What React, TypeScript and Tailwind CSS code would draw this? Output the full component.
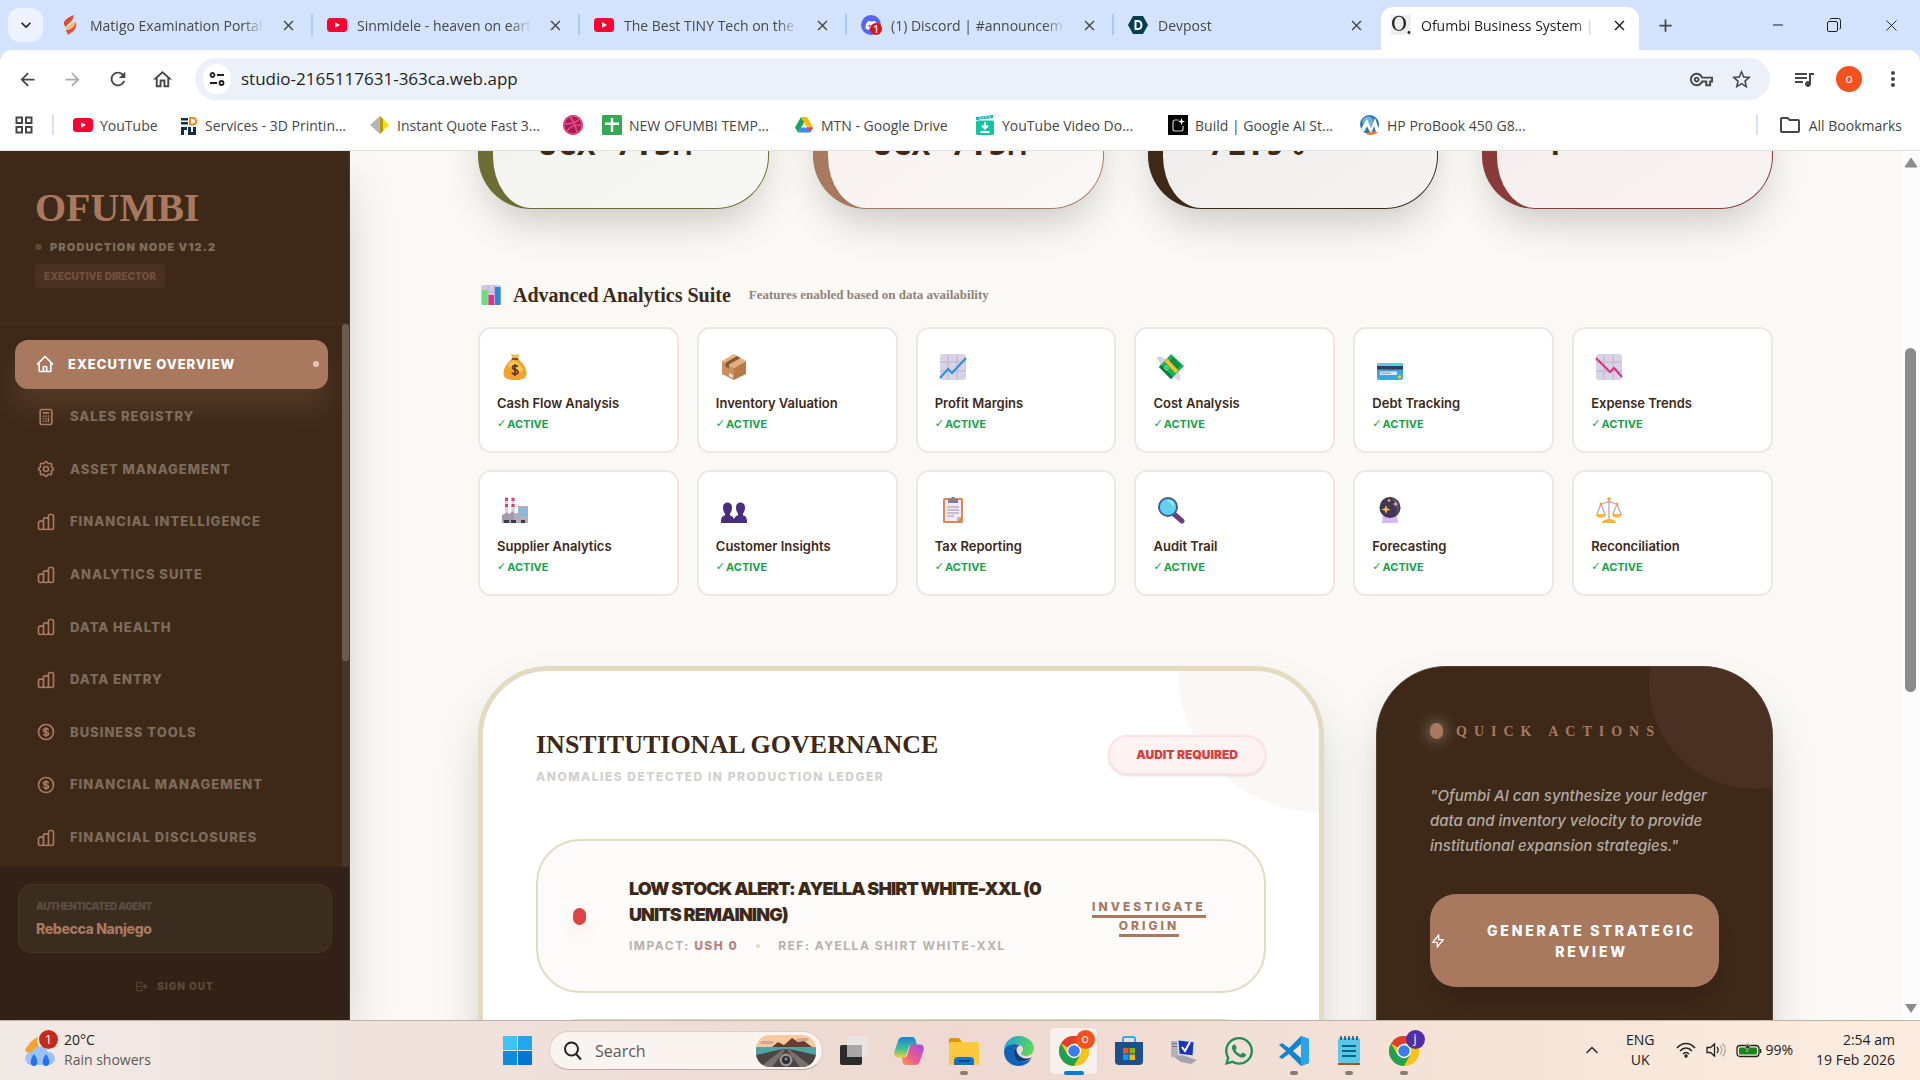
import React from 'react';
import {
    HiOutlineHome,
    HiOutlineCalculator,
    HiOutlineCog,
    HiOutlineChartBar,
    HiOutlineCurrencyDollar,
    HiOutlineLogout,
    HiOutlineLightningBolt,
} from 'react-icons/hi';
import { MdArrowBack, MdArrowForward, MdRefresh, MdOutlineHome, MdStarBorder, MdMoreVert, MdOutlineVpnKey, MdQueueMusic, MdClose, MdAdd, MdExpandMore, MdOutlineFolder } from 'react-icons/md';
import { FaDiscord, FaDribbble, FaWhatsapp } from 'react-icons/fa';
import { ChevronUp, Minus, X } from 'lucide-react';

// --- Favicons ---
const YouTubeIcon = () => (
    <svg viewBox="0 0 20 20" className="w-5 h-5 shrink-0">
        <rect y="3" width="20" height="14" rx="3.500" fill="#ff0033" />
        <path d="M8 7.200v5.600l5-2.800z" fill="#fff" />
    </svg>
);

const MatigoIcon = () => (
    <svg viewBox="0 0 20 20" className="w-5 h-5 shrink-0">
        <path d="M13.500 0C8 3 3.500 5 4 9c.3 1.500 1.500 2.500 2 3 1-4 8-5 7.500-12z" fill="#e8452c" />
        <path d="M6 12c4 0 5-3.500 9-5-1 4-4 6-8 7z" fill="#fbbc14" />
        <path d="M15.500 7c2 4 0 9-8 13 .3-3-1.500-3.500-1.500-5 4-.5 8.500-2 9.500-8z" fill="#f0483e" />
    </svg>
);

const DiscordIcon = () => (
    <span className="relative w-5 h-5 shrink-0 rounded-full bg-[#5865f2] flex items-center justify-center">
        <FaDiscord size={13} className="text-white" />
        <span className="absolute -right-px bottom-0 w-3 h-3 rounded-full bg-[#e0101a] text-white text-[10px] leading-3 text-center font-semibold">1</span>
    </span>
);

const DevpostIcon = () => (
    <svg viewBox="0 0 20 20" className="w-5 h-5 shrink-0">
        <path d="M5 1h10l5 9-5 9H5l-5-9z" fill="#003e54" />
        <path d="M6.500 5h3.300c3 0 4.700 2 4.700 5s-1.700 5-4.700 5H6.500zm2 1.900v6.200h1.300c1.700 0 2.600-1.100 2.600-3.100s-.9-3.100-2.600-3.100z" fill="#fff" />
    </svg>
);

const OfumbiIcon = () => (
    <svg viewBox="0 0 20 20" className="w-5 h-5 shrink-0">
        <rect width="20" height="20" fill="#eeeeee" />
        <path fillRule="evenodd" d="M8 .8c4 0 7 3 7 7.400s-3 7.600-7 7.600-7-3.200-7-7.600S4 .8 8 .8zm0 .9C5 1.700 3.400 4.500 3.400 8.200S5 14.900 8 14.900s4.600-2.900 4.600-6.700S11 1.700 8 1.700z" fill="#222" />
        <circle cx="18" cy="17.500" r="1.400" fill="#222" />
    </svg>
);

const PrintIcon = () => (
    <svg viewBox="0 0 20 20" className="w-5 h-5 shrink-0">
        <path d="M3 3h7v2.500H3zM3 7h7v2.500H3zM3 12h6v3H6v5H3zM10 12h3v5h2v-5h3v8h-8z" fill="#12304e" />
        <path d="M12 3h3c4 0 4 6.500 0 6.500h-3z" fill="none" stroke="#f28a1c" strokeWidth="2" />
    </svg>
);

const QuoteIcon = () => (
    <svg viewBox="0 0 20 20" className="w-5 h-5 shrink-0">
        <path d="M10 1v18L0 10z" fill="#b5b5b5" />
        <path d="M10 1v18l4-4V5z" fill="#b89d00" />
        <path d="M13 4v12l6-6z" fill="#ffdc00" />
    </svg>
);

const DribbbleIcon = () => (
    <span className="w-5 h-5 shrink-0 rounded-full bg-[#a81c56] flex items-center justify-center">
        <FaDribbble size={20} className="text-[#ea4c89]" />
    </span>
);

const SheetPlusIcon = () => (
    <svg viewBox="0 0 20 20" className="w-5 h-5 shrink-0">
        <rect width="20" height="20" rx="1.500" fill="#34a853" />
        <path d="M8.800 3h2.400v4.500H17v2.400h-5.800V17H8.800V9.900H3V7.500h5.800z" fill="#fff" />
    </svg>
);

const DriveIcon = () => (
    <svg viewBox="0 0 20 20" className="w-5 h-5 shrink-0">
        <path d="M7 2 1 12.500l3 5L10.500 7z" fill="#1ea362" />
        <path d="M7 2h6l6 10.500h-6z" fill="#ffba00" />
        <path d="M13 12.500h6l-3 5H4l3-5z" fill="#4285f4" />
        <path d="M13 12.500h6l-2.500 4.500z" fill="#ea4335" />
    </svg>
);

const DownloaderIcon = () => (
    <svg viewBox="0 0 20 20" className="w-5 h-5 shrink-0">
        <path d="m1 2 17-2v3L1 5z" fill="#16b4c8" />
        <path d="m4 2 2 2m1-2.500 2 2m1-2.500 2 2m1-2.500 2 2" stroke="#fff" />
        <rect x="1" y="5.500" width="18" height="14.500" rx="1.500" fill="#14c3a2" />
        <path d="M10 7v6m-3-2.500 3 3 3-3M5.500 17h9" fill="none" stroke="#fff" strokeWidth="2" />
    </svg>
);

const BuildIcon = () => (
    <svg viewBox="0 0 20 20" className="w-5 h-5 shrink-0">
        <rect width="20" height="20" fill="#000" />
        <path d="M10.500 5H7a2 2 0 0 0-2 2v7a2 2 0 0 0 2 2h6a2 2 0 0 0 2-2v-3" fill="none" stroke="#ccc" strokeWidth="1.200" />
        <path d="m13.500 3 .9 2.600L17 6.500l-2.600.9-.9 2.600-.9-2.600L10 6.500l2.600-.9z" fill="#fff" />
    </svg>
);

const HpIcon = () => (
    <svg viewBox="0 0 20 20" className="w-5 h-5 shrink-0">
        <circle cx="9.500" cy="9.500" r="9.500" fill="#2f78b0" />
        <circle cx="8" cy="7" r="5.500" fill="#72b1da" />
        <path d="m1 14 6-10 4 9 4-10 4 12-3 2-2-6-3 8-4-8-3 6z" fill="#fff" />
        <path d="M6 19c4-3 8-3 12-2-3 3-8 4-12 2z" fill="#f5822a" />
    </svg>
);

const TABS = [
    { title: 'Matigo Examination Portal', icon: <MatigoIcon /> },
    { title: 'Sinmidele - heaven on eart', icon: <YouTubeIcon /> },
    { title: 'The Best TINY Tech on the', icon: <YouTubeIcon /> },
    { title: '(1) Discord | #announceme', icon: <DiscordIcon /> },
    { title: 'Devpost', icon: <DevpostIcon /> },
    { title: 'Ofumbi Business System | I', icon: <OfumbiIcon />, active: true },
];

const BOOKMARKS = [
    { title: 'YouTube', icon: <YouTubeIcon />, width: 'w-[105px]' },
    { title: 'Services - 3D Printin...', icon: <PrintIcon />, width: 'w-[192px]' },
    { title: 'Instant Quote Fast 3...', icon: <QuoteIcon />, width: 'w-[193px]' },
    { title: '', icon: <DribbbleIcon />, width: 'w-[39px]' },
    { title: 'NEW OFUMBI TEMP...', icon: <SheetPlusIcon />, width: 'w-[192px]' },
    { title: 'MTN - Google Drive', icon: <DriveIcon />, width: 'w-[181px]' },
    { title: 'YouTube Video Do...', icon: <DownloaderIcon />, width: 'w-[193px]' },
    { title: 'Build | Google AI St...', icon: <BuildIcon />, width: 'w-[192px]' },
    { title: 'HP ProBook 450 G8...', icon: <HpIcon />, width: 'w-[192px]' },
];

const BrowserChrome = () => (
    <header className="shrink-0 bg-[#d3e3fd] font-['Open_Sans',sans-serif] text-[#474747]">
        <div className="h-[50px] flex items-end">
            <button aria-label="Search tabs" className="ml-2 mr-[3px] mb-2 w-[35px] h-[34px] rounded-xl bg-[#edf3fe] flex items-center justify-center text-[#1f1f1f]">
                <MdExpandMore size={20} />
            </button>
            <div className="flex-1 flex items-end">
                {TABS.map((tab) => (
                    <div
                        key={tab.title}
                        className={`flex-1 flex items-center text-[14px] ${tab.active ? 'max-w-[258px] h-[43px] pb-[7px] bg-white rounded-t-xl mr-2 pl-[10px] pr-2 text-[#1f1f1f]' : 'max-w-[267px] h-[50px] pl-[14px] pr-[13px] relative'}`}
                    >
                        {tab.icon}
                        <button className="ml-[10px] flex-1 min-w-0 text-left overflow-hidden whitespace-nowrap [mask-image:linear-gradient(to_right,black_88%,transparent)]">
                            {tab.title}
                        </button>
                        <button aria-label="Close tab" className="ml-3 shrink-0 w-6 h-6 flex items-center justify-center">
                            <MdClose size={17} />
                        </button>
                        {!tab.active && tab.title !== 'Devpost' && <span className="absolute right-0 top-[14px] w-[2px] h-[21px] bg-[#a8c7fa]" />}
                    </div>
                ))}
                <button aria-label="New tab" className="w-9 h-[50px] flex items-center justify-center">
                    <MdAdd size={21} />
                </button>
            </div>
            <div className="flex h-[50px] items-center text-[#1f1f1f]">
                <button aria-label="Minimise" className="w-14 flex justify-center"><Minus size={16} strokeWidth={1.5} /></button>
                <button aria-label="Restore" className="w-14 flex justify-center">
                    <svg viewBox="0 0 14 14" className="w-[14px] h-[14px]" fill="none" stroke="currentColor">
                        <rect x=".5" y="3.500" width="10" height="10" rx="1.500" />
                        <path d="M3 1.500C3 .8 3.500.5 4 .5h7.500a2 2 0 0 1 2 2V10c0 .6-.4 1-1 1" />
                    </svg>
                </button>
                <button aria-label="Close" className="w-[58px] flex justify-center"><X size={19} strokeWidth={1.2} /></button>
            </div>
        </div>

        <div className="bg-white rounded-t-xl">
            <div className="h-[50px] pt-2 flex items-center">
                <button aria-label="Back" className="ml-[5px] w-[45px] flex justify-center"><MdArrowBack size={21} /></button>
                <button aria-label="Forward" className="w-[45px] flex justify-center text-[#aaaaaa]"><MdArrowForward size={21} /></button>
                <button aria-label="Reload" className="w-[45px] flex justify-center"><MdRefresh size={22} /></button>
                <button aria-label="Home" className="w-[45px] flex justify-center"><MdOutlineHome size={23} /></button>
                <div className="ml-[10px] flex-1 h-[42px] rounded-full bg-[#ecf0f9] flex items-center pl-[8px] pr-[17px]">
                    <span className="w-[28px] h-[30px] rounded-full bg-white flex items-center justify-center text-[#1f1f1f]">
                        <svg viewBox="0 0 16 16" className="w-4 h-4" fill="none" stroke="currentColor" strokeWidth="1.800">
                            <circle cx="3.500" cy="4" r="2" />
                            <path d="M8 4h7M1 12h7" />
                            <circle cx="12.500" cy="12" r="2" />
                        </svg>
                    </span>
                    <input aria-label="Address" defaultValue="studio-2165117631-363ca.web.app" className="ml-[10px] flex-1 bg-transparent outline-none text-[17px] text-[#1f1f1f]" />
                    <MdOutlineVpnKey size={23} />
                    <button aria-label="Bookmark this page" className="ml-[17px]"><MdStarBorder size={23} /></button>
                </div>
                <button aria-label="Media" className="ml-[22px]"><MdQueueMusic size={24} /></button>
                <button aria-label="Profile" className="ml-[20px] w-[26px] h-[26px] rounded-full bg-[#f4511e] text-white text-[12px] leading-[24px]">o</button>
                <button aria-label="Menu" className="ml-[19px] mr-[15px]"><MdMoreVert size={24} /></button>
            </div>
            <div className="h-[51px] flex items-center text-[14px] border-b border-[#dde3dd]">
                <svg viewBox="0 0 18 18" className="ml-[15px] w-[18px] h-[18px]" fill="none" stroke="currentColor" strokeWidth="2">
                    <path d="M1.500 1.500H7V7H1.500zM11 1.500h5.500V7H11zM1.500 11H7v5.500H1.500zM11 11h5.500v5.500H11z" />
                </svg>
                <span className="ml-[19px] mr-[19px] w-[2px] h-5 bg-[#d3e3fd]" />
                {BOOKMARKS.map((item) => (
                    <a key={item.width + item.title} href="#" aria-label={item.title || 'Dribbble'} className={`${item.width} shrink-0 flex items-center gap-[7px] whitespace-nowrap`}>
                        {item.icon}
                        {item.title}
                    </a>
                ))}
                <span className="ml-auto w-[2px] h-5 bg-[#d3e3fd]" />
                <a href="#" className="ml-5 mr-[18px] flex items-center gap-[7px] whitespace-nowrap"><MdOutlineFolder size={24} />All Bookmarks</a>
            </div>
        </div>
    </header>
);

// --- Sidebar ---
const NAV = [
    { label: 'Executive Overview', icon: HiOutlineHome, active: true },
    { label: 'Sales Registry', icon: HiOutlineCalculator },
    { label: 'Asset Management', icon: HiOutlineCog },
    { label: 'Financial Intelligence', icon: HiOutlineChartBar },
    { label: 'Analytics Suite', icon: HiOutlineChartBar },
    { label: 'Data Health', icon: HiOutlineChartBar },
    { label: 'Data Entry', icon: HiOutlineChartBar },
    { label: 'Business Tools', icon: HiOutlineCurrencyDollar },
    { label: 'Financial Management', icon: HiOutlineCurrencyDollar },
    { label: 'Financial Disclosures', icon: HiOutlineChartBar },
];

const Sidebar = () => (
    <aside className="relative z-10 w-[350px] shrink-0 flex flex-col bg-[#3e2919] border-r border-[#503629] shadow-[0_25px_50px_-12px_rgba(0,0,0,0.25)]">
        <div className="h-[173px] pt-[33px] pl-[35px] border-b border-[#4a3223]">
            <div className="font-['Liberation_Serif',serif] font-bold text-[40px] leading-[48px] text-[#a8795f]">OFUMBI</div>
            <div className="mt-[7px] flex items-center gap-2">
                <span className="w-[7px] h-[6px] rounded-full bg-[#55502b]" />
                <span className="text-[11px] leading-4 font-black tracking-widest text-[#7d6c5d]">PRODUCTION NODE V12.2</span>
            </div>
            <div className="mt-[9px] inline-block px-[9px] rounded bg-[#493022] text-[10px] leading-6 font-black text-[#744f3b]">EXECUTIVE DIRECTOR</div>
        </div>

        <div className="flex-1 min-h-0 flex">
            <nav className="flex-1 flex flex-col pt-[14px] pb-[3px] pl-[15px] pr-[14px]">
                {NAV.map(({ label, icon: Icon, active }) => (
                    <div key={label} className="flex-1 py-[2px]">
                        <a
                            href="#"
                            className={`h-full flex items-center uppercase text-[13px] font-extrabold tracking-[1px] ${active ? 'pl-5 pr-[9px] gap-[13px] rounded-[13px] bg-[#a8795f] text-white shadow-[0_20px_25px_0_rgba(168,121,95,0.18)]' : 'pl-[21px] gap-[14px] text-[#7d6c5d]'}`}
                        >
                            <Icon size={20} className={active ? 'text-white' : 'text-[#a8795f]'} />
                            {label}
                            {active && <span className="ml-auto w-[6px] h-[6px] rounded-full bg-[#dcc7bd]" />}
                        </a>
                    </div>
                ))}
            </nav>
            <div className="w-[7px] bg-[#483529] rounded-full">
                <div className="h-[62%] bg-[#6d5b4f] rounded-full" />
            </div>
        </div>

        <div className="h-[153px] pt-[17px] px-[18px] bg-[#322116]">
            <div className="h-[69px] rounded-[13px] border border-[#44342a] bg-[#3b2c20] pl-[17px] pt-[13px] mr-[-1px]">
                <div className="text-[10px] leading-4 font-black tracking-tighter text-[#5c4d42]">AUTHENTICATED AGENT</div>
                <div className="mt-[5px] text-[14px] leading-5 font-extrabold tracking-tight text-[#a8795f]">Rebecca Nanjego</div>
            </div>
            <button className="mt-[25px] w-full flex items-center justify-center gap-[9px] text-[10px] leading-4 font-black tracking-widest text-[#5c483a]">
                <HiOutlineLogout size={13} />
                SIGN OUT
            </button>
        </div>
    </aside>
);

// --- Feature icons ---
const ChartFrame = ({ children }: { children: React.ReactNode }) => (
    <svg viewBox="0 0 28 28" className="w-7 h-7">
        <rect x="1" y="1" width="26" height="26" rx="3" fill="#d9d1e4" />
        <path d="M1 9h26M1 18h26M9 1v26M18 1v26" stroke="#bfb4cf" />
        {children}
    </svg>
);

const BarsEmoji = () => (
    <svg viewBox="0 0 20 20" className="w-5 h-5">
        <rect width="20" height="20" rx="2" fill="#d3cbe0" />
        <path d="M0 7h20M0 14h20M7 0v20M13.500 0v20" stroke="#b9aecb" />
        <rect x="1" y="5" width="5.500" height="15" fill="#6fdc7c" />
        <rect x="7.500" y="10" width="5.500" height="10" fill="#e0308a" />
        <rect x="14" y="2" width="5.500" height="18" fill="#2a86e0" />
    </svg>
);

const MoneyBag = () => (
    <svg viewBox="0 0 28 28" className="w-7 h-7">
        <path d="M10 1l4 1 4-1-1.500 5h-5z" fill="#f5b63a" />
        <path d="M11 6h6c5 4 8.500 9 8.500 14 0 5-3 7-11.500 7S2.500 25 2.500 20C2.500 15 6 10 11 6z" fill="#f2a32e" />
        <path d="M12 7c5 2 10 7 10 11-5 2-12-1-15-6z" fill="#fbc653" />
        <rect x="10.500" y="5" width="7" height="2" rx="1" fill="#7a4b33" />
        <path d="M17 13.500c-1.500-1.500-5.500-1.300-5.500 1 0 2.800 5.500 1.500 5.500 4.500 0 2.500-4.500 2.500-6 .8M14 11v12" fill="none" stroke="#5f3d2b" strokeWidth="1.800" />
    </svg>
);

const Box = () => (
    <svg viewBox="0 0 28 28" className="w-7 h-7">
        <path d="M14 1 26 8 14 15 2 8z" fill="#e0b07c" />
        <path d="M2 8v13l12 6V15z" fill="#c98e5e" />
        <path d="M26 8v13l-12 6V15z" fill="#b97848" />
        <path d="M17 3 5.500 9.800v4L9 15.500v-4L20.500 5z" fill="#8b5638" />
        <path d="m9 20 4 2v3l-4-2z" fill="#f0dede" />
    </svg>
);

const FlyingMoney = () => (
    <svg viewBox="0 0 28 28" className="w-7 h-7">
        <path d="M0 4c5-1 9 2 11 5l-6 6C3 13 2 11 3 9 1 8 0 6 0 4z" fill="#d4d2da" />
        <path d="M18 16c5 3 6 7 5 12-4-2-8-4-9-9z" fill="#dcdbe2" />
        <path d="M14 1 27 13 14 26 2 14z" fill="#17b45a" />
        <path d="m16 4 8 8-4 4-8-8z" fill="#0f8c46" />
        <path d="m9 7 11 12" stroke="#fbbf2d" strokeWidth="4" />
        <path d="m2 14 12 12 2-2L4 12z" fill="#0c7b3d" />
        <circle cx="9.500" cy="15" r="1.800" fill="none" stroke="#9be8b8" />
    </svg>
);

const CreditCard = () => (
    <svg viewBox="0 0 28 28" className="w-7 h-7">
        <rect x="1" y="10" width="26" height="17" rx="2" fill="#35a9e8" />
        <path d="M1 12a2 2 0 0 1 2-2h22a2 2 0 0 1 2 2v1H1z" fill="#55cfe8" />
        <path d="M1 13h26v3.500H1z" fill="#403750" />
        <rect x="4" y="18.500" width="17" height="3.500" fill="#e8e2ea" />
        <path d="M5 20.200h10" stroke="#9d92a8" />
        <circle cx="23.500" cy="24" r="1.800" fill="#f7c531" />
    </svg>
);

const Factory = () => (
    <svg viewBox="0 0 28 28" className="w-7 h-7">
        <path d="M4 1h3v16H4zM10.500 1h3v16h-3z" fill="#d8d0dd" />
        <path d="M4 2h3v3H4zM4 8h3v3H4zM10.500 2h3v3h-3zM10.500 8h3v3h-3z" fill="#e33a78" />
        <path d="M1 19l6-3v2l6-3v12H1z" fill="#a59bab" />
        <path d="M13 17h4v-7h10v17H13z" fill="#b5adbd" />
        <path d="M18 12h8v8h-8z" fill="#5cc8f5" />
        <path d="M20.600 12v8M23.300 12v8M18 14.600h8M18 17.300h8" stroke="#b5adbd" />
        <path d="M3 24h5v3H3zM10 24h5v3h-5zM20 24h4v3h-4z" fill="#3f3648" />
    </svg>
);

const People = () => (
    <svg viewBox="0 0 28 28" className="w-7 h-7">
        <path d="M3 11c0-6 9-6 9 0 0 3-.8 5-2 6.500v2c3 .5 4 2 4 7.500H1c0-5.500 1-7 4-7.500v-2C3.800 16 3 14 3 11zM16 11c0-6 9-6 9 0 0 3-.8 5-2 6.500v2c3 .5 4 2 4 7.500H14c0-5.500 1-7 4-7.500v-2C16.800 16 16 14 16 11z" fill="#4b2d80" />
        <path d="M14 22v5" stroke="#351c63" />
    </svg>
);

const Clipboard = () => (
    <svg viewBox="0 0 28 28" className="w-7 h-7">
        <rect x="4" y="2" width="20" height="25" rx="1.500" fill="#d98a52" />
        <path d="M6 4h16v17l-4 4H6z" fill="#efeaf5" />
        <path d="M18 25v-4h4z" fill="#c2b6d0" />
        <path d="M8 11h12M8 14h12M8 17h12M8 20h7" stroke="#9d92a8" strokeWidth="1.200" />
        <path d="M9 3h3c0-3 4-3 4 0h3v4H9z" fill="#85798c" />
    </svg>
);

const Magnifier = () => (
    <svg viewBox="0 0 28 28" className="w-7 h-7">
        <path d="m17 18 8 7" stroke="#6e3d86" strokeWidth="5" strokeLinecap="round" />
        <circle cx="11" cy="11" r="9" fill="#62d0ef" stroke="#3f5f9e" strokeWidth="2" />
        <path d="M11 5c3 0 5 2 5 5" fill="none" stroke="#a6ecfb" strokeWidth="2" />
    </svg>
);

const CrystalBall = () => (
    <svg viewBox="0 0 28 28" className="w-7 h-7">
        <path d="M7 20h14l1 7H6z" fill="#d9b7f2" />
        <circle cx="14" cy="11.500" r="10.500" fill="#433556" />
        <path d="M14 1a10.500 10.500 0 0 1 6 18c2-6 0-13-6-18z" fill="#5e4b75" />
        <path d="m10 9 1.200 3.300L14.500 13.500l-3.300 1.200L10 18l-1.200-3.300-3.300-1.200 3.300-1.200zM19.500 5l.8 2.200 2.200.8-2.200.8-.8 2.200-.8-2.200-2.200-.8 2.200-.8z" fill="#fbb946" />
        <circle cx="13" cy="4.500" r="1.300" fill="#fbb946" />
    </svg>
);

const Scales = () => (
    <svg viewBox="0 0 28 28" className="w-7 h-7">
        <path d="M14 3v22M6 8c3 0 5-2 8-2s5 2 8 2M6 8 2 18M6 8l4 10M22 8l-4 10M22 8l4 10" fill="none" stroke="#baa5bf" strokeWidth="1.300" />
        <path d="M1 18h10c0 5-10 5-10 0zM17 18h10c0 5-10 5-10 0zM7 27c0-3 4-4 7-4s7 1 7 4z" fill="#fbb53a" />
        <circle cx="14" cy="3" r="1.800" fill="#f7a62a" />
        <circle cx="6" cy="8" r="1.500" fill="#f7a62a" />
        <circle cx="22" cy="8" r="1.500" fill="#f7a62a" />
    </svg>
);

const FEATURES = [
    { name: 'Cash Flow Analysis', icon: <MoneyBag /> },
    { name: 'Inventory Valuation', icon: <Box /> },
    { name: 'Profit Margins', icon: <ChartFrame><path d="m1 25 8-9 4 4L27 5" fill="none" stroke="#2a8fe0" strokeWidth="2" /></ChartFrame> },
    { name: 'Cost Analysis', icon: <FlyingMoney /> },
    { name: 'Debt Tracking', icon: <CreditCard /> },
    { name: 'Expense Trends', icon: <ChartFrame><path d="m1 5 14 14 4-4 8 9" fill="none" stroke="#e0307a" strokeWidth="2" /></ChartFrame> },
    { name: 'Supplier Analytics', icon: <Factory /> },
    { name: 'Customer Insights', icon: <People /> },
    { name: 'Tax Reporting', icon: <Clipboard /> },
    { name: 'Audit Trail', icon: <Magnifier /> },
    { name: 'Forecasting', icon: <CrystalBall /> },
    { name: 'Reconciliation', icon: <Scales /> },
];

const STATS = [
    { value: 'UGX 7.5M', style: 'border-[#6b6d33] from-[#f0f1ec] to-[#f8f9f5]' },
    { value: 'UGX 7.5M', style: 'border-[#a8795f] from-[#f6f0ed] to-[#fbf8f7]' },
    { value: '71.9%', style: 'border-[#3e2919] from-[#ecebe9] to-[#f5f4f3]' },
    { value: '4', style: 'border-[#8b3a3a] from-[#f6eded] to-[#f8f3f3]' },
];

const Dashboard = () => (
    <main className="flex-1 min-w-0 overflow-hidden bg-[#faf9f5] px-32 text-[#3e2919]">
        <section className="-mt-[120px] grid grid-cols-4 gap-[44px]">
            {STATS.map((stat, i) => (
                <div
                    key={i}
                    className={`h-[178px] pl-[45px] pt-[98px] rounded-[53px] border border-l-[15px] bg-linear-to-br shadow-[0_20px_40px_-8px_rgba(0,0,0,0.2)] font-['DejaVu_Sans_Mono',monospace] font-bold text-[32px] leading-[28px] ${stat.style}`}
                >
                    {stat.value}
                </div>
            ))}
        </section>

        <section className="mt-[70px]">
            <div className="h-8 flex items-center pl-[3px] font-['Liberation_Serif',serif] font-bold">
                <BarsEmoji />
                <h2 className="ml-3 text-[20px]">Advanced Analytics Suite</h2>
                <span className="ml-[18px] text-[13px] text-[#90827a]">Features enabled based on data availability</span>
            </div>
            <div className="mt-4 grid grid-cols-6 gap-x-[18px] gap-y-[17px]">
                {FEATURES.map((feature) => (
                    <div key={feature.name} className="h-[126px] pl-[17px] pt-6 rounded-[13px] border-2 border-[#f0e6e2] bg-white">
                        <div className="pl-1">{feature.icon}</div>
                        <div className="mt-3 text-[13px] leading-5 font-semibold">{feature.name}</div>
                        <div className="mt-[3px] flex gap-px text-[11px] leading-4 font-bold text-[#16a34a]">
                            <span className="font-['DejaVu_Sans'] font-normal">✓</span>
                            ACTIVE
                        </div>
                    </div>
                ))}
            </div>
        </section>

        <section className="mt-[70px] grid grid-cols-3 gap-[52px]">
            <div className="relative overflow-hidden col-span-2 h-[700px] p-[53px] rounded-[70px] border-[5px] border-[#e4d9c1] bg-white shadow-[0_25px_50px_-12px_rgba(0,0,0,0.25)]">
                <div className="absolute -top-[141px] -right-[141px] w-[282px] h-[282px] rounded-full bg-[#fcf7f7]" />
                <div className="relative flex items-center justify-between pt-px">
                    <div>
                        <h3 className="font-['Liberation_Serif',serif] font-bold text-[26px] leading-10">INSTITUTIONAL GOVERNANCE</h3>
                        <p className="mt-1 text-[12px] leading-4 font-extrabold tracking-[1.5px] text-[#d5cfca]">ANOMALIES DETECTED IN PRODUCTION LEDGER</p>
                    </div>
                    <button className="h-10 px-[26px] rounded-full border-2 border-[#fee2e2] bg-[#fef2f2] shadow-sm text-[12px] font-black text-[#dc3c3c]">AUDIT REQUIRED</button>
                </div>

                <div className="mt-[54px] h-[154px] flex items-center px-[35px] rounded-[44px] border-2 border-[#e4d9c1] bg-[#fcfbf9]">
                    <span className="w-[13px] h-[17px] shrink-0 rounded-full bg-[#e04343] shadow-[0_8px_14px_rgba(224,67,67,0.08)]" />
                    <div className="ml-[43px] flex-1">
                        <div className="text-[18px] leading-[26px] font-black tracking-tighter">
                            LOW STOCK ALERT: AYELLA SHIRT WHITE-XXL (0<br />UNITS REMAINING)
                        </div>
                        <div className="mt-2 flex items-center text-[12px] leading-5 font-bold tracking-[1.5px] text-[#b9b1ab]">
                            <span>IMPACT: <span className="font-extrabold text-[#b97f7f]">USH 0</span></span>
                            <span className="mx-[18px] w-1 h-1 rounded-full bg-[#e4d9c1]" />
                            <span>REF: AYELLA SHIRT WHITE-XXL</span>
                        </div>
                    </div>
                    <button className="w-[124px] mr-[18px] text-center text-[12px] leading-[19px] font-extrabold tracking-[3px] text-[#a8795f]">
                        <span className="pb-px border-b-3 border-[#a8795f]">INVESTIGATE ORIGIN</span>
                    </button>
                </div>
                <div className="mt-[26px] h-[154px] rounded-[44px] border-2 border-[#e4d9c1] bg-[#fcfbf9]" />
            </div>

            <div className="relative overflow-hidden h-[700px] px-[53px] pt-[52px] rounded-[70px] border border-[#55402f] bg-[#3e2919] shadow-[0_25px_50px_-12px_rgba(0,0,0,0.25)]">
                <div className="absolute -top-[89px] -right-[88px] w-[211px] h-[211px] rounded-full bg-[#4a3022]" />
                <div className="relative flex items-center gap-[13px] h-6">
                    <span className="w-[13px] h-[16px] rounded-full bg-[#a8795f] shadow-[0_0_15px_rgba(255,255,255,0.5)]" />
                    <h3 className="font-['Liberation_Serif',serif] font-bold text-[14px] tracking-[7px] text-[#a8795f]">QUICK ACTIONS</h3>
                </div>
                <p className="relative mt-[40px] text-[15px] leading-[25px] italic font-medium text-[#b2a9a3]">
                    "Ofumbi AI can synthesize your ledger data and inventory velocity to provide institutional expansion strategies."
                </p>
                <button className="mt-9 w-full h-[93px] flex items-center rounded-[26px] bg-[#a8795f] shadow-[0_20px_25px_-5px_rgba(0,0,0,0.15)] text-white">
                    <HiOutlineLightningBolt size={16} className="shrink-0" />
                    <span className="flex-1 pl-[34px] pr-4 text-[14px] leading-[21px] font-extrabold tracking-[0.2em]">GENERATE STRATEGIC REVIEW</span>
                </button>
            </div>
        </section>
    </main>
);

const PageScrollbar = () => (
    <div className="w-[19px] shrink-0 bg-[#fcfcfc] flex flex-col items-center py-[7px] text-[#8b8b8b]">
        <svg viewBox="0 0 12 10" className="w-3 h-[10px]"><path d="M6 0l6 9H0z" fill="currentColor" stroke="currentColor" strokeLinejoin="round" /></svg>
        <div className="mt-[180px] w-[11px] h-[344px] rounded-full bg-[#8b8b8b]" />
        <svg viewBox="0 0 12 10" className="mt-auto w-3 h-[10px]"><path d="M6 10l6-9H0z" fill="currentColor" /></svg>
    </div>
);

// --- Taskbar ---
const ChromeLogo = ({ badge, color }: { badge: string; color: string }) => (
    <span className="relative">
        <svg viewBox="0 0 30 30" className="w-[30px] h-[30px]">
            <circle cx="15" cy="15" r="15" fill="#fbc116" />
            <path d="M15 15 2 7.500A15 15 0 0 1 28 7.500H15z" fill="#e33b2e" />
            <path d="M15 15 8.500 18.700 2 7.500A15 15 0 0 0 15 30l6.500-11.300z" fill="#1fa14f" />
            <path d="M15 7.500h13A15 15 0 0 1 15 30l6.500-11.300z" fill="#fbc116" />
            <circle cx="15" cy="15" r="7.200" fill="#fff" />
            <circle cx="15" cy="15" r="5.800" fill="#3b7ded" />
        </svg>
        <span className={`absolute -top-[6px] -right-[6px] w-[19px] h-[19px] rounded-full text-white text-[12px] leading-[17px] text-center ${color}`}>{badge}</span>
    </span>
);

const TaskViewLogo = () => (
    <svg viewBox="0 0 30 30" className="w-[30px] h-[30px]">
        <rect x="1" y="9" width="22" height="20" rx="2" fill="#2b2b2b" />
        <rect x="8" y="1" width="21" height="20" rx="2" fill="#e8e6e6" opacity=".9" />
        <rect x="8" y="9" width="15" height="12" fill="#a9a7a7" />
    </svg>
);

const CopilotLogo = () => (
    <svg viewBox="0 0 30 30" className="w-[30px] h-[30px]">
        <defs>
            <linearGradient id="copA" x1="0" y1="0" x2="0" y2="1"><stop stopColor="#1b7fe0" /><stop offset=".6" stopColor="#3fc48c" /><stop offset="1" stopColor="#f2d03a" /></linearGradient>
            <linearGradient id="copB" x1="1" y1="0" x2="0" y2="1"><stop stopColor="#a64ee0" /><stop offset=".6" stopColor="#ee5a8c" /><stop offset="1" stopColor="#f9a04a" /></linearGradient>
        </defs>
        <path d="M9 1h9c2 0 3 1 3.500 3L23 9h-5c-2 0-3 1-3.500 3L12 20c-.5 1-1 1.500-3 1.500H4c-3 0-4.500-2-3.500-6L4 5c1-3 2.500-4 5-4z" fill="url(#copA)" />
        <path d="M21 29h-9c-2 0-3-1-3.500-3L8 21.500h2c2 0 3-1 3.500-3L16 10c.5-1 1.500-1.500 3-1.500h7c3 0 4.500 2 3.500 6L26 25c-1 3-2.500 4-5 4z" fill="url(#copB)" />
    </svg>
);

const ExplorerLogo = () => (
    <svg viewBox="0 0 30 30" className="w-[30px] h-[30px]">
        <path d="M0 4a2 2 0 0 1 2-2h8l3 4h15v6H0z" fill="#d8960c" />
        <rect y="6" width="30" height="23" rx="2" fill="#fcc93c" />
        <path d="M5 29v-4a4 4 0 0 1 4-4h12a4 4 0 0 1 4 4v4z" fill="#0c74cf" />
        <rect x="9" y="24" width="12" height="1.800" rx=".9" fill="#07427c" />
    </svg>
);

const EdgeLogo = () => (
    <svg viewBox="0 0 30 30" className="w-[30px] h-[30px]">
        <defs>
            <linearGradient id="edgeA" x1="0" y1="0" x2="1" y2=".3"><stop stopColor="#1b9de2" /><stop offset="1" stopColor="#5bd75a" /></linearGradient>
        </defs>
        <path d="M0 15C0 6 7 0 15 0s15 6 15 12c0 5-4 8-8 8-4 0-6-2-4-4 3-4-1-8-6-8C6 8 1 11 0 15z" fill="url(#edgeA)" />
        <path d="M0 15C1 11 5 8 11 8c2 0 4 1 5 2-5 0-7 5-6 9 1 6 8 9 17 4-2 4-7 7-12 7C6 30 0 24 0 15z" fill="#0f62b4" />
        <path d="M10 19c-1-4 1-8 5-9-5 2-2 10 4 12 3 1 6 .5 9-.5C20 28 11 26 10 19z" fill="#0a3f80" />
    </svg>
);

const StoreLogo = () => (
    <svg viewBox="0 0 30 30" className="w-[30px] h-[30px]">
        <path d="M9 7V3a2 2 0 0 1 2-2h8a2 2 0 0 1 2 2v4" fill="none" stroke="#29aef0" strokeWidth="2" />
        <path d="M1 6h28v19a4 4 0 0 1-4 4H5a4 4 0 0 1-4-4z" fill="#1c4f8e" />
        <path d="M9 12h5.500v5.500H9z" fill="#f25022" />
        <path d="M15.500 12H21v5.500h-5.500z" fill="#7fba00" />
        <path d="M9 18.500h5.500V24H9z" fill="#00a4ef" />
        <path d="M15.500 18.500H21V24h-5.500z" fill="#ffb900" />
    </svg>
);

const PcLogo = () => (
    <svg viewBox="0 0 30 30" className="w-[30px] h-[30px]">
        <path d="M2 5h8v16H2z" fill="#b4b2b8" />
        <path d="M3 7h5v1H3zM3 10h5v1H3z" fill="#77757d" />
        <path d="m8 3 18 2-1 16-16-2z" fill="#dfdee4" />
        <path d="m9.500 4.500 15 1.700-1 13-13-1.500z" fill="#1b35b8" />
        <path d="m13 11 3 4 5-9" fill="none" stroke="#fff" strokeWidth="2" />
        <path d="m5 21 8-2 15 5-6 4-10-2z" fill="#a5a3aa" />
    </svg>
);

const VsCodeLogo = () => (
    <svg viewBox="0 0 30 30" className="w-[30px] h-[30px]">
        <path fillRule="evenodd" d="m22 0 8 3v24l-8 3-12-12-7 5-3-2 7-6-7-6 3-2 7 5zm0 8-8 7 8 7z" fill="#1283cf" />
        <path d="m22 0 8 3v24l-8 3z" fill="#2ba3ea" />
    </svg>
);

const NotepadLogo = () => (
    <svg viewBox="0 0 30 30" className="w-[30px] h-[30px]">
        <rect x="4" y="2" width="22" height="25" rx="2" fill="#57c8ea" />
        <path d="M4 27h22v2H4z" fill="#a5561c" />
        <path d="M8 10h14M8 15h14M8 20h14" stroke="#0d6282" strokeWidth="1.800" />
        <path d="M7 0v4M11 0v4M15 0v4M19 0v4M23 0v4" stroke="#15506a" strokeWidth="1.500" />
    </svg>
);

const APPS = [
    { name: 'Task view', icon: <TaskViewLogo /> },
    { name: 'Copilot', icon: <CopilotLogo /> },
    { name: 'Explorer', icon: <ExplorerLogo />, running: true },
    { name: 'Edge', icon: <EdgeLogo /> },
    { name: 'Chrome', icon: <ChromeLogo badge="o" color="bg-[#f4511e]" />, active: true },
    { name: 'Store', icon: <StoreLogo /> },
    { name: 'This PC', icon: <PcLogo /> },
    { name: 'WhatsApp', icon: <FaWhatsapp size={32} className="text-[#1f8f58]" /> },
    { name: 'VS Code', icon: <VsCodeLogo />, running: true },
    { name: 'Notepad', icon: <NotepadLogo />, running: true },
    { name: 'Chrome (j)', icon: <ChromeLogo badge="j" color="bg-[#512da8]" />, running: true },
];

const Taskbar = () => (
    <footer className="relative z-20 h-[60px] shrink-0 flex items-center border-t border-[#bfb3ab] bg-linear-to-r from-[#f1e9e6] via-[#edd9d1] to-[#fcecdf] font-['Open_Sans',sans-serif] text-[14px] text-[#222]">
        <button className="w-[503px] pl-6 flex items-center gap-2 text-left">
            <span className="relative">
                <svg viewBox="0 0 32 36" className="w-8 h-9">
                    <path d="M14 4C8 6 4 12 1 17c4 6 15 4 18-2-4 1-7-4-5-11z" fill="#f5a32c" />
                    <path d="M8 32c-9 0-9-13 0-13 2-7 14-7 16 0 9 0 9 13 0 13z" fill="#9cc3f7" />
                    <path d="M10 21c4 5 5 12 0 12s-4-7 0-12zM22 21c4 5 5 12 0 12s-4-7 0-12z" fill="#2373ee" />
                </svg>
                <span className="absolute -top-[3px] -right-[2px] w-[19px] h-[19px] rounded-full bg-[#c42b1c] text-white text-[13px] leading-[19px] text-center">1</span>
            </span>
            <span className="leading-5 pb-px">
                20°C<br /><span className="text-[#5f5956]">Rain showers</span>
            </span>
        </button>

        <button aria-label="Start" className="w-[30px]">
            <svg viewBox="0 0 30 30" className="w-[30px] h-[30px]">
                <path d="M0 0h14v14H0z" fill="#3fc3f7" />
                <path d="M15 0h14v14H15z" fill="#22a7ea" />
                <path d="M0 15h14v14H0z" fill="#0f8ade" />
                <path d="M15 15h14v14H15z" fill="#0477d2" />
            </svg>
        </button>
        <label className="ml-4 w-[274px] h-[39px] rounded-full border border-[#dccdc6] border-b-[#b9aaa3] bg-[#faf4f1] flex items-center pl-[13px] pr-[6px]">
            <svg viewBox="0 0 20 20" className="w-5 h-5 shrink-0" fill="none" stroke="#222" strokeWidth="2">
                <circle cx="8.500" cy="8" r="6.500" />
                <path d="m13 13 5 5.500" />
            </svg>
            <input placeholder="Search" aria-label="Search" className="ml-3 flex-1 min-w-0 bg-transparent outline-none text-[16px] placeholder:text-[#5f5956]" />
            <svg viewBox="0 0 60 32" className="w-[60px] h-8 shrink-0">
                <defs><clipPath id="scene"><rect width="60" height="32" rx="14" /></clipPath></defs>
                <g clipPath="url(#scene)">
                    <path d="M0 0h60v32H0z" fill="#f8c9a0" />
                    <path d="M6 6h10c2 0 2 3 0 3H6c-2 0-2-3 0-3zM42 3h9c2 0 2 3 0 3h-9c-2 0-2-3 0-3z" fill="#d3a695" />
                    <path d="M0 12h60v8H0z" fill="#4fa3a5" />
                    <path d="m16 12 6-5 6 3 8-7 6 4 6-1 8 6z" fill="#6b3d30" />
                    <path d="M0 32V20l22-5c6-1 10-1 16 0l22 5v12z" fill="#4b4442" />
                    <path d="M4 32 26 15h3L16 32zM56 32 34 15h-3l13 17z" fill="#7b706b" />
                    <circle cx="30" cy="25" r="6.500" fill="#9a908e" />
                    <circle cx="30" cy="25" r="4" fill="#2b2a33" />
                    <circle cx="30" cy="24" r="1.500" fill="#8c93b0" />
                </g>
            </svg>
        </label>

        <div className="ml-[3px] flex">
            {APPS.map((app) => (
                <button key={app.name} aria-label={app.name} className="relative w-[55px] h-[58px] flex items-center justify-center">
                    {app.active && <span className="absolute inset-x-[3px] inset-y-[5px] rounded-[5px] border border-[#e8d8d0] bg-[#f8f0ec]" />}
                    <span className="relative flex">{app.icon}</span>
                    {app.active && <span className="absolute bottom-[5px] w-5 h-1 rounded-full bg-[#0878d4]" />}
                    {app.running && <span className="absolute bottom-[5px] w-2 h-1 rounded-full bg-[#857b77]" />}
                </button>
            ))}
        </div>

        <div className="ml-auto mr-[25px] flex items-center leading-5 pb-px">
            <ChevronUp size={20} strokeWidth={1.6} />
            <span className="ml-6 text-center">ENG<br />UK</span>
            <svg viewBox="0 0 20 16" className="ml-[22px] w-5 h-4" fill="none" stroke="currentColor" strokeWidth="1.500">
                <path d="M1 6c5-6 13-6 18 0M4 9c3.500-4 8.500-4 12 0M7 12c2-2 4-2 6 0" />
                <circle cx="10" cy="14" r="1" fill="currentColor" />
            </svg>
            <svg viewBox="0 0 20 16" className="ml-[10px] w-5 h-4" fill="none" stroke="currentColor" strokeWidth="1.300">
                <path d="M1 5.500h3.500L8.500 2v12l-4-3.500H1zM11 5c1.500 2 1.500 4 0 6" />
                <path d="M14 3.500c2.500 3 2.500 6 0 9M16.500 1.500c3.500 4 3.500 9 0 13" stroke="#b9aaa0" />
            </svg>
            <svg viewBox="0 0 26 16" className="ml-[10px] w-[26px] h-4">
                <rect x="1" y="3.500" width="22" height="11" rx="3" fill="none" stroke="#222" strokeWidth="1.300" />
                <rect x="3" y="5.500" width="18" height="7" rx="1" fill="#16861a" />
                <path d="M24.500 7v4" stroke="#222" strokeWidth="1.500" />
                <path d="m12.500 0-4 6h3l-1 4 4.500-6h-3z" fill="#222" stroke="#f6e6db" strokeWidth=".6" />
            </svg>
            <span className="ml-[3px]">99%</span>
            <span className="ml-[23px] text-right">2:54 am<br />19 Feb 2026</span>
        </div>
    </footer>
);

const App: React.FC = () => (
    <div className="h-screen flex flex-col overflow-hidden bg-white">
        <BrowserChrome />
        <div className="flex-1 min-h-0 flex font-['Inter',sans-serif] overflow-hidden">
            <Sidebar />
            <Dashboard />
            <PageScrollbar />
        </div>
        <Taskbar />
    </div>
);

export default App;
